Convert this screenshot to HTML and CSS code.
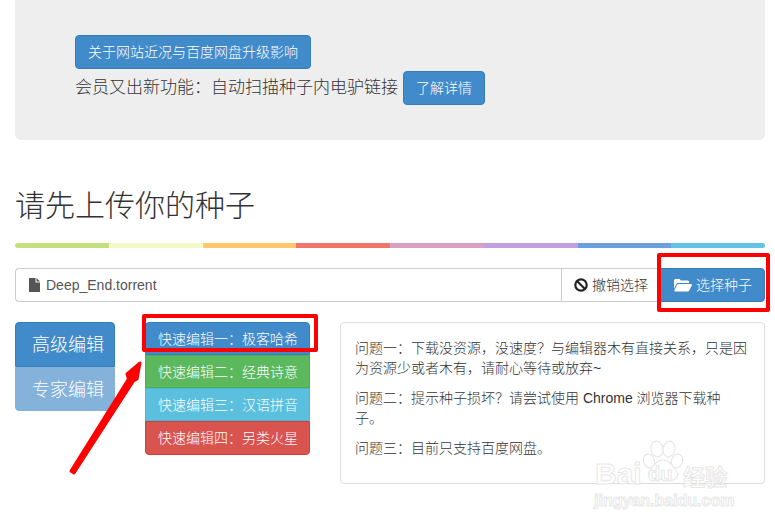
FILE: index.html
```html
<!DOCTYPE html>
<html lang="zh-CN">
<head>
<meta charset="utf-8">
<title>请先上传你的种子</title>
<link rel="stylesheet" href="styles.css">
</head>
<body>
<div class="page">
  <section class="jumbotron">
    <div class="jumbo-line"><a class="btn">关于网站近况与百度网盘升级影响</a></div>
    <div class="jumbo-line jumbo-second"><span class="jumbo-text">会员又出新功能：自动扫描种子内电驴链接</span><a class="btn">了解详情</a></div>
  </section>

  <h1 class="title">请先上传你的种子</h1>

  <div class="rainbow">
    <i class="seg s1"></i><i class="seg s2"></i><i class="seg s3"></i><i class="seg s4"></i>
    <i class="seg s5"></i><i class="seg s6"></i><i class="seg s7"></i><i class="seg s8"></i>
  </div>

  <div class="input-group">
    <div class="file-field">
      <svg class="file-icon" viewBox="0 0 11 14" width="11" height="14"><path d="M0 0H6.5V4.5H11V14H0Z" fill="#555"/><path d="M7.5 0L11 3.5H7.5Z" fill="#555"/></svg>
      <span>Deep_End.torrent</span>
    </div>
    <div class="addon">
      <svg class="ban-icon" viewBox="0 0 14 14" width="14" height="14"><circle cx="7" cy="7" r="5.7" fill="none" stroke="#222" stroke-width="2.2"/><path d="M3 3L11 11" stroke="#222" stroke-width="2.2"/></svg>
      <span>撤销选择</span>
    </div>
    <a class="choose">
      <svg class="folder-icon" viewBox="0 0 18 14" width="18" height="14"><path d="M0 3C0 1.6 .8 1 1.8 1H5.5L7 2.6H13.5C14.5 2.6 15 3.2 15 4V5H4.2C3.2 5 2.6 5.5 2.2 6.3L0 11Z" fill="#fff"/><path d="M4.4 6H17C17.8 6 18.2 6.6 17.8 7.4L15.4 12.2C15 13 14.4 13.4 13.6 13.4H1.2C.5 13.4 .2 12.9 .5 12.3L3 7C3.3 6.3 3.7 6 4.4 6Z" fill="#fff"/></svg>
      <span>选择种子</span>
    </a>
  </div>

  <div class="editor-row">
    <nav class="tabs">
      <a class="tab tab-active">高级编辑</a>
      <a class="tab tab-muted">专家编辑</a>
    </nav>
    <div class="quick-list">
      <a class="quick q-blue">快速编辑一：极客哈希</a>
      <a class="quick q-green">快速编辑二：经典诗意</a>
      <a class="quick q-cyan">快速编辑三：汉语拼音</a>
      <a class="quick q-red">快速编辑四：另类火星</a>
    </div>
    <div class="panel">
      <p>问题一：下载没资源，没速度？与编辑器木有直接关系，只是因为资源少或者木有，请耐心等待或放弃~</p>
      <p>问题二：提示种子损坏？请尝试使用 Chrome 浏览器下载种子。</p>
      <p>问题三：目前只支持百度网盘。</p>
    </div>
  </div>
</div>

<div class="mark mark-choose"></div>
<div class="mark mark-quick"></div>
<svg class="arrow" viewBox="0 0 90 130" width="90" height="130"><path d="M5 121L62.5 29L61 24L74 13L71 29L67.5 31L8 123Z" fill="#f00" stroke="#f00" stroke-width="3" stroke-linejoin="round"/></svg>

<div class="watermark">
  <svg class="paw" viewBox="0 0 44 42" width="44" height="42" fill="#fff" stroke="#e8e8e8" stroke-width="1.2"><ellipse cx="9" cy="21" rx="5.5" ry="7" transform="rotate(-20 9 21)"/><ellipse cx="17" cy="9" rx="6" ry="8" transform="rotate(-10 17 9)"/><ellipse cx="29" cy="9" rx="6" ry="8" transform="rotate(10 29 9)"/><ellipse cx="37" cy="21" rx="5.5" ry="7" transform="rotate(20 37 21)"/><path d="M23 20C30 20 32 26 36 30C40 35 36 41 30 40C26 39 20 39 16 40C10 41 6 35 10 30C14 26 16 20 23 20Z"/></svg>
  <span class="wm-bai">Bai</span>
  <span class="wm-du">du</span>
  <span class="wm-cn">经验</span>
  <span class="wm-url">jingyan.baidu.com</span>
</div>
</body>
</html>
```
FILE: styles.css
```css
* { box-sizing: border-box; }
html, body { margin: 0; padding: 0; }
body {
  position: relative;
  width: 775px;
  height: 526px;
  overflow: hidden;
  background: #fff;
  color: #333;
  font: 300 14px/20px "Liberation Sans", "Noto Sans CJK SC", sans-serif;
}
.page { padding: 0 10px 0 15px; }

.jumbotron {
  height: 140px;
  padding: 35px 60px;
  background: #eee;
  border-radius: 0 0 6px 6px;
}
.jumbo-line { display: flex; align-items: center; }
.jumbo-second { margin-top: 2px; }
.jumbo-text { font-size: 17px; margin-right: 5px; color: #333; }

.btn {
  display: inline-flex;
  align-items: center;
  height: 34px;
  padding: 0 12px;
  background: #428bca;
  border: 1px solid #357ebd;
  border-radius: 4px;
  color: #fff;
}

.title {
  margin: 45px 0 16px;
  height: 42px;
  font-size: 30px;
  font-weight: 300;
  line-height: 42px;
  color: #333;
}

.rainbow { display: flex; height: 5px; border-radius: 3px; overflow: hidden; }
.seg { flex: 1; }
.s1 { background: #c5e17f; }
.s2 { background: #f5f9c8; }
.s3 { background: #ffc96b; }
.s4 { background: #f1756b; }
.s5 { background: #d9a0c4; }
.s6 { background: #c39fdd; }
.s7 { background: #6b9fe0; }
.s8 { background: #62c3e3; }

.input-group { display: flex; height: 34px; margin-top: 20px; }
.file-field {
  display: flex;
  align-items: center;
  flex: 1;
  padding-left: 13px;
  border: 1px solid #ccc;
  border-right: 0;
  border-radius: 4px 0 0 4px;
  color: #555;
}
.file-icon { margin-right: 6px; }
.addon {
  display: flex;
  align-items: center;
  width: 99px;
  padding-left: 12px;
  border: 1px solid #ccc;
  border-right: 0;
  color: #333;
}
.ban-icon { margin-right: 4px; }
.choose {
  display: flex;
  align-items: center;
  width: 105px;
  padding-left: 13px;
  background: #428bca;
  border: 1px solid #357ebd;
  border-radius: 0 4px 4px 0;
  color: #fff;
}
.folder-icon { margin-right: 4px; }

.editor-row { display: flex; align-items: flex-start; margin-top: 20px; }

.tabs { width: 100px; margin-right: 30px; }
.tab {
  display: flex;
  align-items: center;
  height: 45px;
  padding: 1px 0 0 16px;
  font-size: 18px;
  color: #fff;
  background: #428bca;
  border: 1px solid #357ebd;
}
.tab-active { border-radius: 4px 4px 0 0; }
.tab-muted {
  height: 44px;
  background: #85b2da;
  border-color: #85b2da;
  border-radius: 0 0 4px 4px;
}

.quick-list { width: 165px; margin-right: 30px; }
.quick {
  display: flex;
  align-items: center;
  height: 33px;
  padding-left: 12px;
  color: #fff;
  border: 1px solid;
}
.q-blue { background: #428bca; border-color: #357ebd; border-radius: 4px 4px 0 0; }
.q-green { background: #5cb85c; border-color: #4cae4c; }
.q-cyan { background: #5bc0de; border-color: #46b8da; }
.q-red { height: 34px; background: #d9534f; border-color: #d43f3a; border-radius: 0 0 4px 4px; }

.panel {
  flex: 1;
  height: 162px;
  padding: 15px 16px 15px 14px;
  border: 1px solid #ddd;
  border-radius: 4px;
}
.panel p { margin: 0 0 10px; }

/* annotations drawn over the page */
.mark {
  position: absolute;
  border: 4px solid #f00;
  border-radius: 2px;
}
.mark-choose { left: 657px; top: 253px; width: 113px; height: 59px; }
.mark-quick { left: 142px; top: 314px; width: 176px; height: 38px; }
.arrow { position: absolute; left: 66px; top: 350px; }

.watermark {
  position: absolute;
  left: 590px;
  top: 438px;
  width: 150px;
  height: 75px;
  color: #fff;
  -webkit-text-stroke: 1px #e8e8e8;
}
.watermark span { position: absolute; }
.paw { position: absolute; left: 50px; top: 2px; }
.wm-bai { left: 5px; top: 21px; font: 700 30px/30px "Liberation Sans", sans-serif; }
.wm-du { left: 58px; top: 24px; font: 700 20px/24px "Liberation Sans", sans-serif; }
.wm-cn { left: 93px; top: 24px; font: 700 22px/26px "Noto Sans CJK SC", sans-serif; }
.wm-url { left: 4px; top: 54px; font: 700 16px/18px "Liberation Sans", sans-serif; }
```
